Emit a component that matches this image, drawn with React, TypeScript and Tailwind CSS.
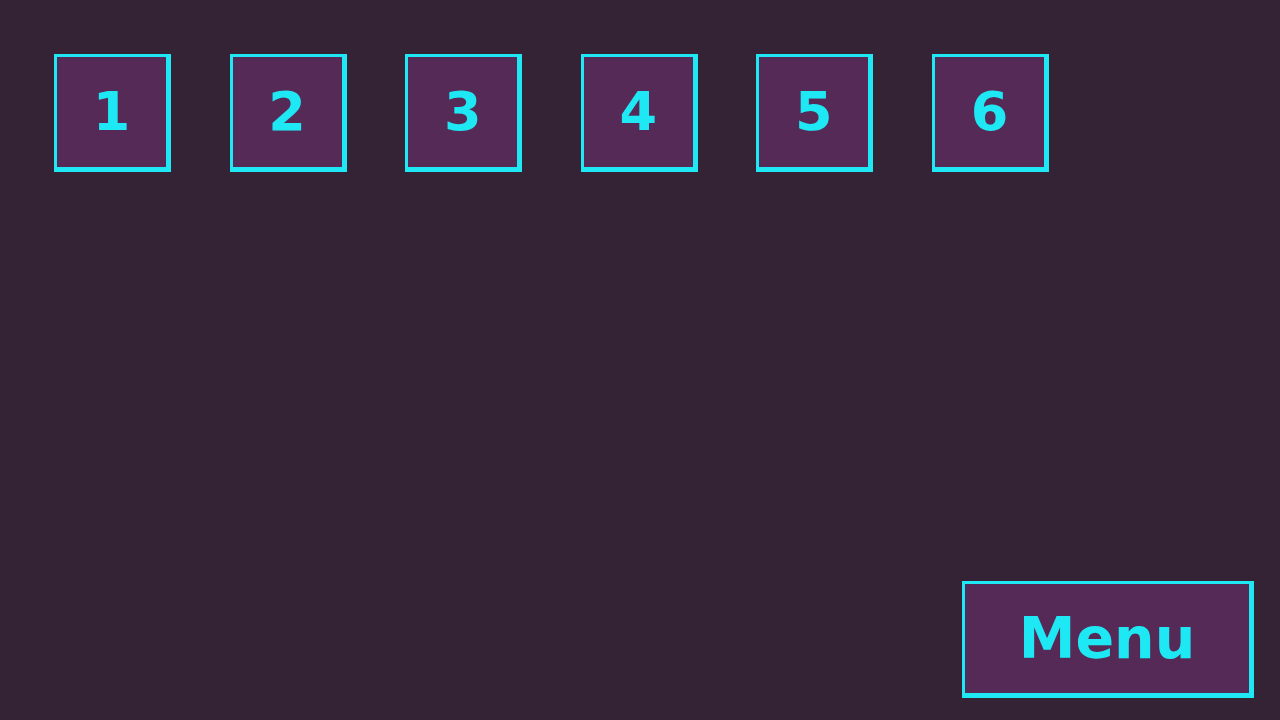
const levels = ["1", "2", "3", "4", "5", "6"];

const tile =
  "flex items-center justify-center bg-[#552a57] border-[#1ee8f4] border-t-[3px] border-l-[3px] border-r-[5px] border-b-[5px] text-[#1ee8f4] font-bold";

export default function App() {
  return (
    <div
      className="flex h-screen w-full flex-col justify-between bg-[#332334] pt-[54px] pl-[54px] pr-[26px] pb-[22px]"
      style={{ fontFamily: '"DejaVu Sans", "Liberation Sans", sans-serif' }}
    >
      <div className="flex gap-[58.6px]">
        {levels.map((n) => (
          <button key={n} className={`${tile} h-[118px] w-[117px] text-[54px] leading-none`}>
            {n}
          </button>
        ))}
      </div>
      <div className="flex justify-end">
        <button className={`${tile} h-[117px] w-[292px] text-[57px] leading-none`}>
          Menu
        </button>
      </div>
    </div>
  );
}
